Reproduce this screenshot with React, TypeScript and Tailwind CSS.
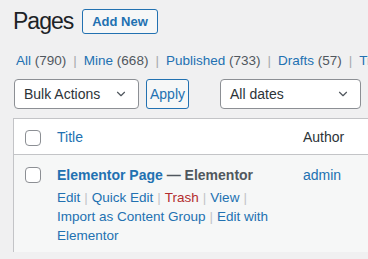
import { ChevronDown } from "lucide-react";

const font = { fontFamily: '"Liberation Sans", Arial, sans-serif' };

function Select({ label, width }: { label: string; width: string }) {
  return (
    <div
      className={`${width} h-[30px] flex items-center justify-between pl-[9px] pr-[10px] bg-white border border-[#8c8f94] rounded-[4px] text-[14px] text-[#2c3338] shrink-0`}
    >
      <span>{label}</span>
      <ChevronDown className="w-[14px] h-[14px] text-[#50575e]" strokeWidth={2} />
    </div>
  );
}

function Sep() {
  return <span className="text-[#c3c4c7] mx-[4px]">|</span>;
}

function Filter({ name, count, last }: { name: string; count: string; last?: boolean }) {
  return (
    <span className="whitespace-nowrap">
      <span className="text-[#2271b1]">{name}</span>{" "}
      <span className="text-[#50575e]">({count})</span>
      {!last && <span className="text-[#a7aaad] mx-[7px]">|</span>}
    </span>
  );
}

export default function App() {
  return (
    <div className="w-[368px] h-[259px] overflow-hidden bg-[#f0f0f1]" style={font}>
      <div className="pl-[14px] pt-[9px]">
        <div className="flex items-center gap-[9px] h-[25px]">
          <h1 className="text-[23px] text-[#1d2327] leading-none -mt-[1px] -ml-[1px] tracking-[-1px]">
            Pages
          </h1>
          <button className="h-[25px] px-[9px] border border-[#2271b1] rounded-[3px] text-[#2271b1] text-[13px] font-semibold bg-[#f6f7f7]">
            Add New
          </button>
        </div>

        <div className="mt-[19px] pl-[2px] text-[13.5px] whitespace-nowrap h-[16px] leading-[16px]">
          <Filter name="All" count="790" />
          <Filter name="Mine" count="668" />
          <Filter name="Published" count="733" />
          <Filter name="Drafts" count="57" />
          <span className="text-[#2271b1]">Trash</span>
        </div>

        <div className="mt-[10px] flex items-center whitespace-nowrap">
          <Select label="Bulk Actions" width="w-[125px]" />
          <button className="ml-[7px] h-[30px] w-[43px] shrink-0 border border-[#2271b1] rounded-[3px] text-[#2271b1] text-[14px] bg-[#f6f7f7]">
            Apply
          </button>
          <div className="ml-[31px]">
            <Select label="All dates" width="w-[141px]" />
          </div>
        </div>

        <div className="mt-[9px] -ml-[1px] w-[420px] border-l border-t border-[#c3c4c7] bg-white">
          <div className="flex items-center h-[36px] pt-[2px] border-b border-[#c3c4c7]">
            <div className="w-[43px] pl-[11px] shrink-0">
              <div className="w-[16px] h-[16px] border border-[#8c8f94] rounded-[4px] bg-white" />
            </div>
            <div className="w-[246px] text-[14px] text-[#2271b1] shrink-0">Title</div>
            <div className="text-[14px] text-[#2c3338]">Author</div>
          </div>
          <div className="flex h-[97px] bg-[#f6f7f7] pt-[10px]">
            <div className="w-[43px] pl-[11px] shrink-0 pt-[2px]">
              <div className="w-[16px] h-[16px] border border-[#8c8f94] rounded-[4px] bg-white" />
            </div>
            <div className="w-[230px] shrink-0 mr-[16px]">
              <div className="text-[14px] font-bold leading-[20px]">
                <span className="text-[#2271b1]">Elementor Page</span>
                <span className="text-[#50575e]"> — Elementor</span>
              </div>
              <div className="mt-[3px] text-[13.5px] leading-[19px] text-[#2271b1]">
                <span>Edit</span>
                <Sep />
                <span>Quick Edit</span>
                <Sep />
                <span className="text-[#b32d2e]">Trash</span>
                <Sep />
                <span>View</span>
                <span className="text-[#c3c4c7] ml-[4px]">|</span>{" "}
                <span>Import as Content Group</span>
                <Sep />
                <span>Edit with Elementor</span>
              </div>
            </div>
            <div className="text-[14px] text-[#2271b1] leading-[20px]">admin</div>
          </div>
        </div>
      </div>
    </div>
  );
}
